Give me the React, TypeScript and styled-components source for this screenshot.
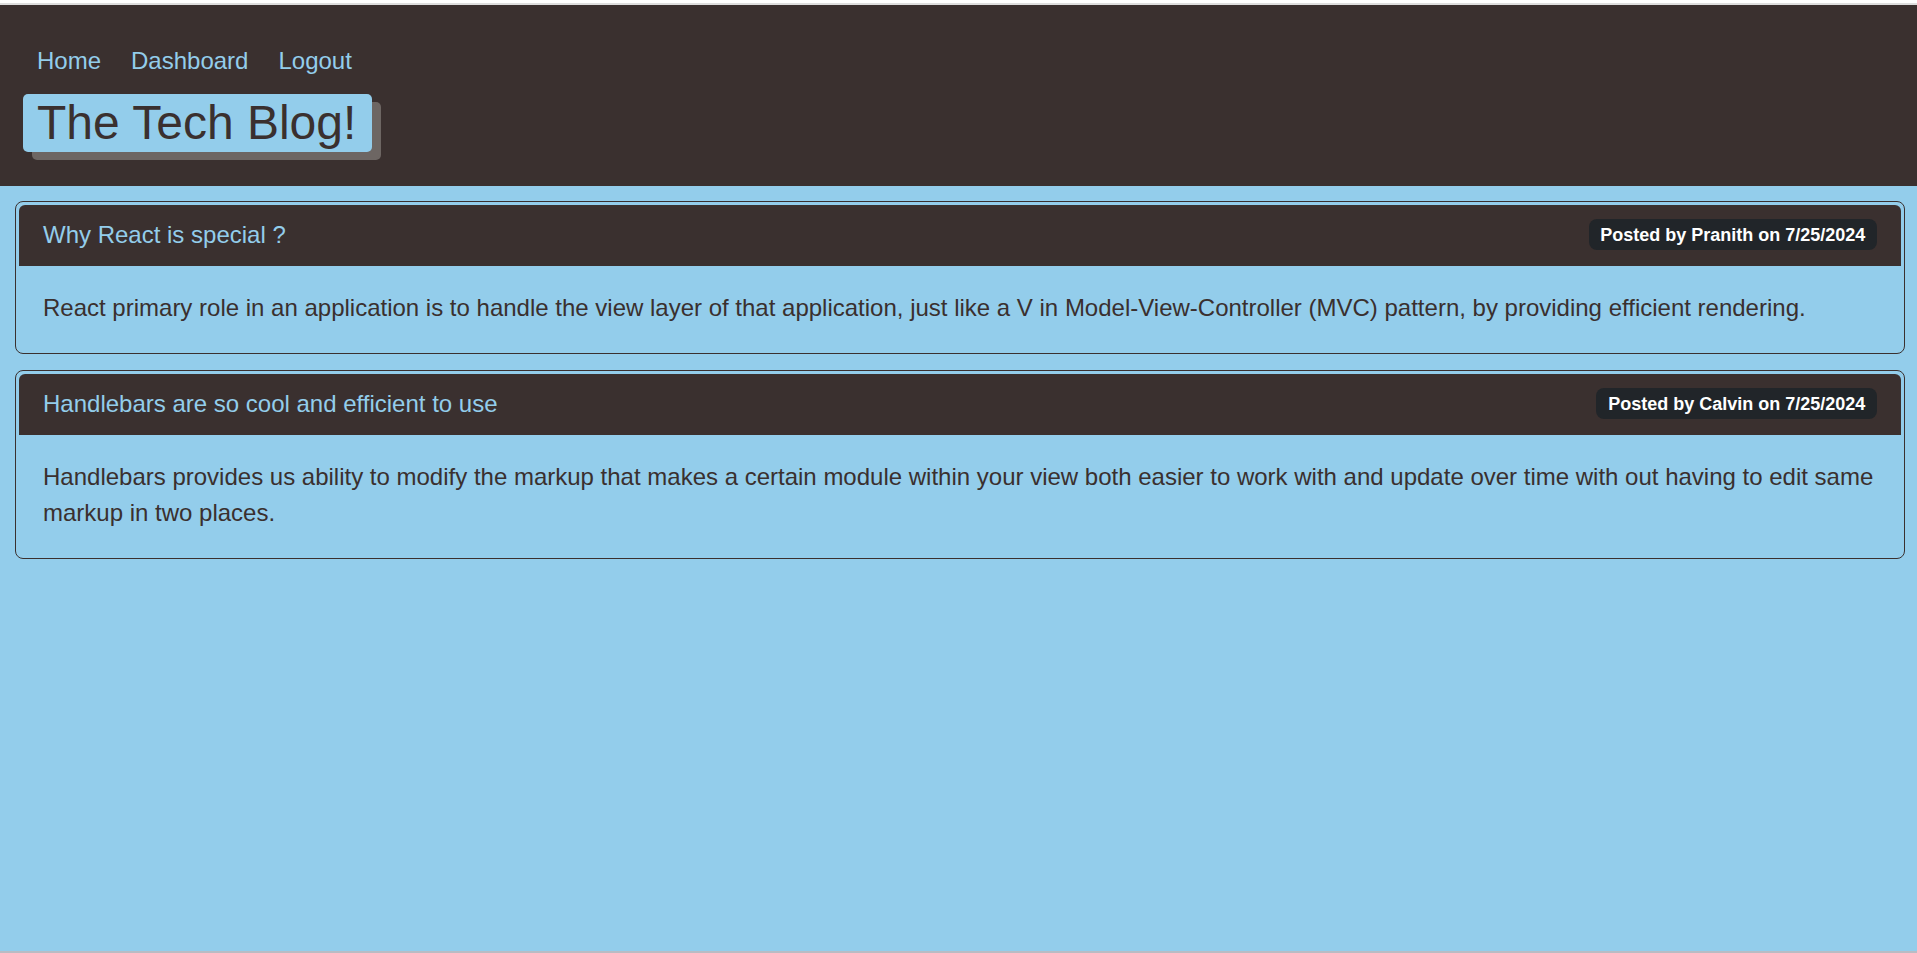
import React from "react";
import styled, { createGlobalStyle } from "styled-components";

const DARK = "#3a302f";
const BLUE = "#93cdeb";

const GlobalStyle = createGlobalStyle`
  html {
    background: #ffffff;
  }
  body {
    margin: 3px 0 0 0;
    font-family: "Liberation Sans", Arial, sans-serif;
    color: ${DARK};
  }
  * {
    box-sizing: border-box;
  }
`;

const Page = styled.div`
  min-height: calc(100vh - 3px);
  display: flex;
  flex-direction: column;
  border-top: 2px solid #dedede;
  border-bottom: 2px solid #b9bcc4;
  background: ${BLUE};
`;

const Header = styled.header`
  background: ${DARK};
  padding: 38px 23px 34px;
  display: flex;
  flex-direction: column;
  align-items: flex-start;
  gap: 15px;
`;

const Nav = styled.nav`
  display: flex;
  gap: 30px;
  padding-left: 14px;
`;

const NavLink = styled.a`
  color: ${BLUE};
  font-size: 24px;
  line-height: 36px;
  text-decoration: none;
  cursor: pointer;
`;

const Title = styled.h1`
  margin: 0;
  background: ${BLUE};
  color: ${DARK};
  font-size: 48px;
  font-weight: 400;
  line-height: 1.2;
  padding: 0 16px 0 14px;
  border-radius: 5px;
  box-shadow: 9px 8px 0 #6d6663;
`;

const Main = styled.main`
  flex: 1;
  padding: 15px 12px 15px 15px;
  display: flex;
  flex-direction: column;
  gap: 16px;
`;

const Card = styled.article`
  border: 1px solid ${DARK};
  border-radius: 8px;
  padding: 3px;
`;

const CardHeader = styled.div`
  background: ${DARK};
  border-radius: 6px 6px 0 0;
  border-bottom: 1px solid ${DARK};
  padding: 12px 24px;
  display: flex;
  align-items: center;
  justify-content: space-between;
`;

const CardTitle = styled.h2`
  margin: 0;
  color: ${BLUE};
  font-size: 24px;
  font-weight: 400;
  line-height: 36px;
`;

const Badge = styled.span`
  background: #212529;
  color: #ffffff;
  font-size: 18px;
  font-weight: 700;
  line-height: 1;
  padding: 6.3px 11.7px;
  border-radius: 8px;
  white-space: nowrap;
`;

const CardBody = styled.p`
  margin: 0;
  padding: 24px;
  font-size: 24px;
  line-height: 36px;
  color: ${DARK};
`;

const posts = [
  {
    title: "Why React is special ?",
    author: "Pranith",
    date: "7/25/2024",
    body:
      "React primary role in an application is to handle the view layer of that application, just like a V in Model-View-Controller (MVC) pattern, by providing efficient rendering.",
  },
  {
    title: "Handlebars are so cool and efficient to use",
    author: "Calvin",
    date: "7/25/2024",
    body:
      "Handlebars provides us ability to modify the markup that makes a certain module within your view both easier to work with and update over time with out having to edit same markup in two places.",
  },
];

export default function App() {
  return (
    <>
      <GlobalStyle />
      <Page>
        <Header>
          <Nav>
            <NavLink>Home</NavLink>
            <NavLink>Dashboard</NavLink>
            <NavLink>Logout</NavLink>
          </Nav>
          <Title>The Tech Blog!</Title>
        </Header>
        <Main>
          {posts.map((p) => (
            <Card key={p.title}>
              <CardHeader>
                <CardTitle>{p.title}</CardTitle>
                <Badge>
                  Posted by {p.author} on {p.date}
                </Badge>
              </CardHeader>
              <CardBody>{p.body}</CardBody>
            </Card>
          ))}
        </Main>
      </Page>
    </>
  );
}
